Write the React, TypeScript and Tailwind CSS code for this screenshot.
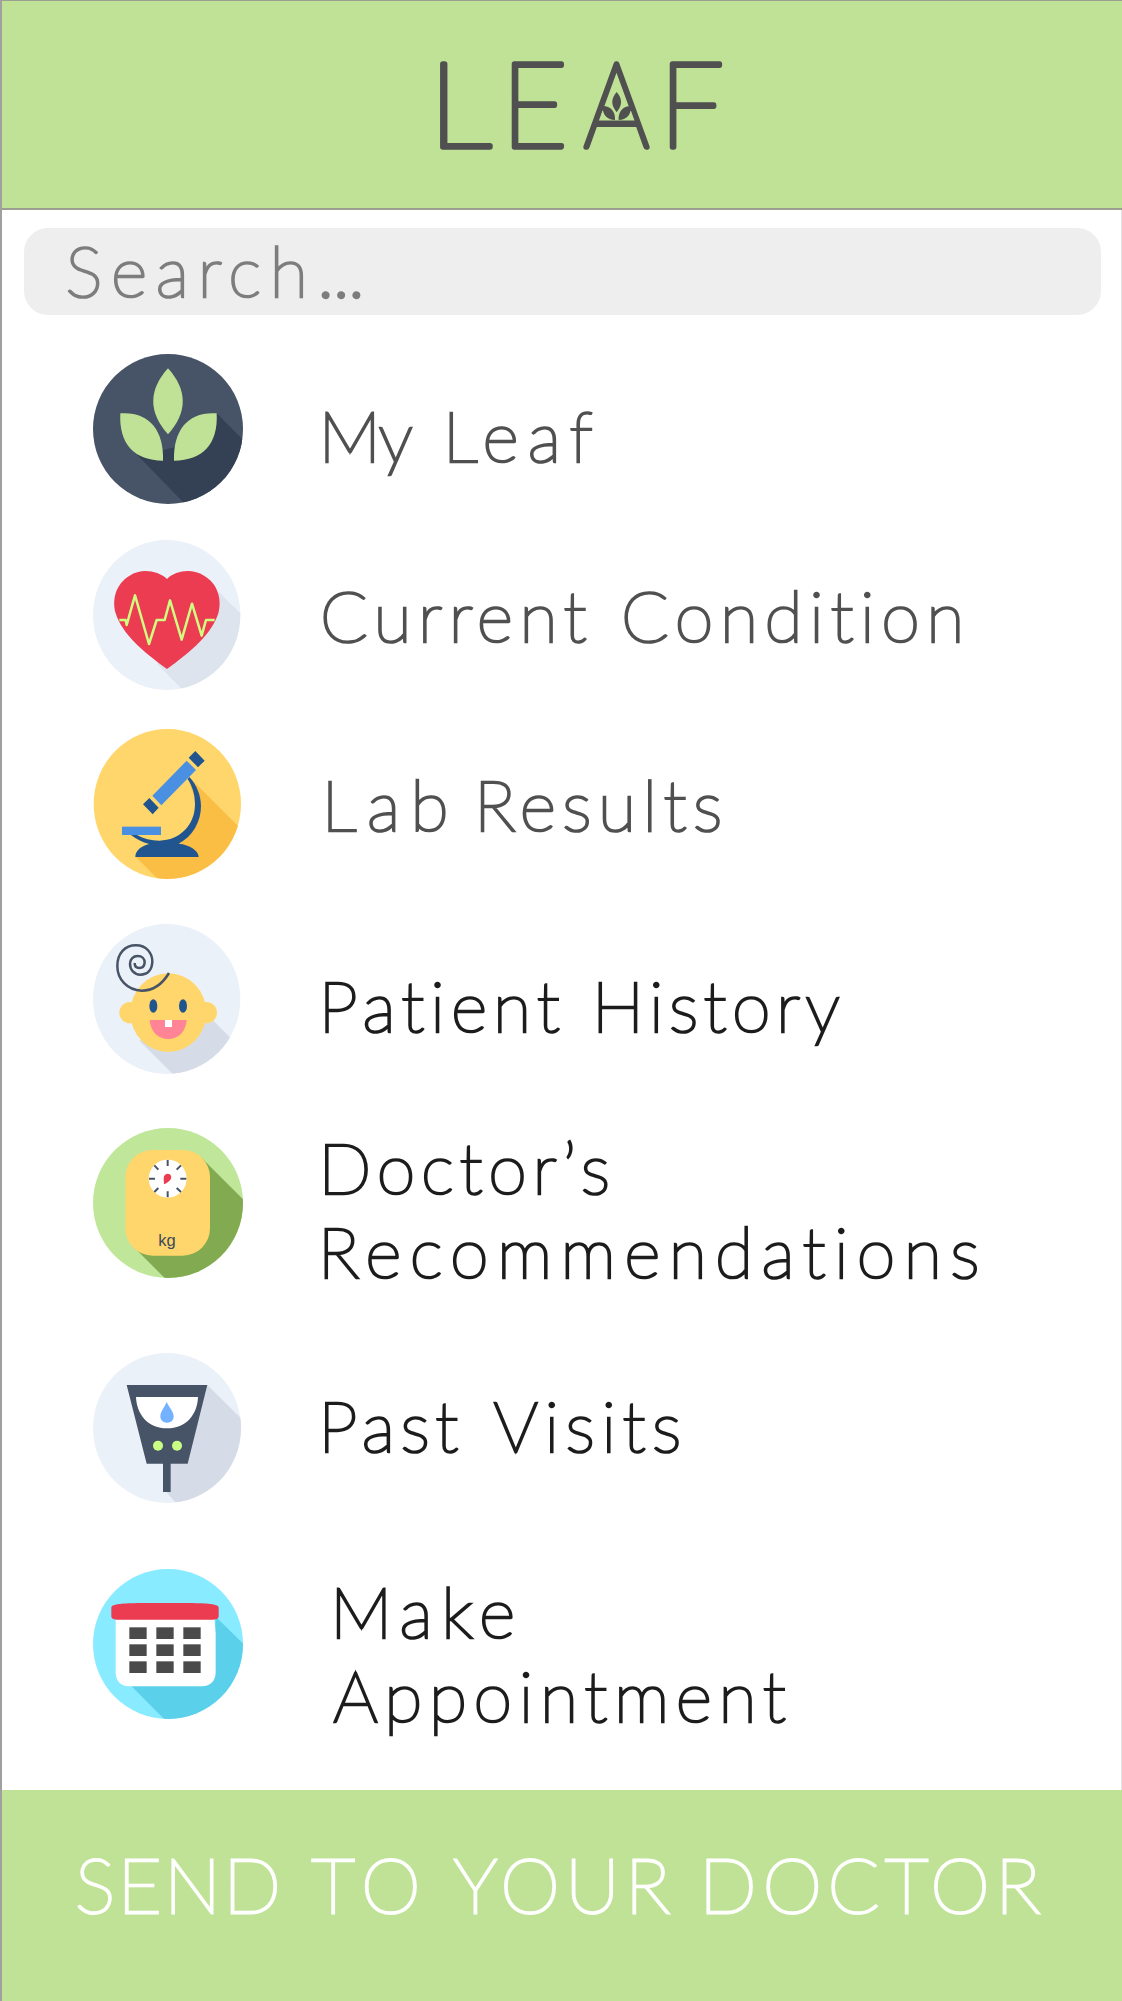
import React from "react";

type Word = { text: string; className: string };
type Line = { className: string; words: Word[] };
type Item = { icon: React.ReactNode; row: string; label: string; lines: Line[] };

function Badge({ id, top, cx, rx, fill, children }: {
  id: string; top: number; cx: number; rx: number; fill: string; children: React.ReactNode;
}) {
  return (
    <svg className="size-[150px] shrink-0" viewBox={`39 ${top} 450 450`} aria-hidden="true">
      <defs>
        <clipPath id={id}>
          <ellipse cx={cx} cy={top + 225} rx={rx} ry="225" />
        </clipPath>
      </defs>
      <g clipPath={`url(#${id})`}>
        <rect x="39" y={top} width="450" height="450" fill={fill} />
        {children}
      </g>
    </svg>
  );
}

const LeafIcon = () => (
  <Badge id="c-leaf" top={42} cx={264} rx={225} fill="#475366">
    <path d="M410 220L520 330V520H342L172 345L240 332L284 322Z" fill="#344054" />
    <path d="M264 85C323 150 323 218 264 283C205 218 205 150 264 85Z" fill="#c0e297" />
    <path d="M121 220C205 214 252 268 249 362C163 362 116 312 121 220Z" fill="#c0e297" />
    <path d="M410 220C326 214 279 268 282 362C368 362 415 312 410 220Z" fill="#c0e297" />
  </Badge>
);

const HeartIcon = () => (
  <Badge id="c-heart" top={45} cx={260} rx={221} fill="#ebf1f8">
    <path d="M416 200L520 304V520H333L232 418Z" fill="#dde4ed" />
    <path d="M261 162C232 135 182 130 149 152C108 176 95 222 107 265C126 326 188 380 261 432C334 380 396 326 415 265C427 222 412 174 372 152C338 130 288 135 261 162Z" fill="#eb3c51" />
    <path d="M118 285H137L140 300L165 211L207 357L230 285H254L270 226L305 344L336 236L365 332L378 285H404" fill="none" stroke="#d1fc82" strokeWidth="7.5" />
  </Badge>
);

const MicroscopeIcon = () => (
  <Badge id="c-micro" top={42} cx={262} rx={221} fill="#ffd66b">
    <path d="M328 187L520 379V540H281L167 425L300 385L345 300Z" fill="#fbbe44" />
    <ellipse cx="235" cy="268" rx="110" ry="109" fill="#ffd66b" />
    <path d="M328 186C350 210 363 240 363 273C363 320 338 364 296 386C330 389 356 408 356 426H166C166 406 184 393 208 387C187 382 167 372 153 360H171C191 371 213 377 238 377C300 376 345 330 345 268C345 240 338 215 323 192Z" fill="#215590" />
    <rect x="126" y="335" width="117" height="25" fill="#4a90e2" />
    <path d="M320 137L348 165L244 271L217 242Z" fill="#4a90e2" />
    <path d="M346 108L374 137L354 157L326 128ZM208 249L236 278L218 298L189 268Z" fill="#215590" />
  </Badge>
);

const BabyIcon = () => (
  <Badge id="c-baby" top={42} cx={260} rx={221} fill="#ebf1f8">
    <path d="M401 333L470 402V520H306L178 392Z" fill="#d5dce7" />
    <circle cx="150" cy="308" r="32" fill="#ffd66b" />
    <circle cx="379" cy="308" r="32" fill="#ffd66b" />
    <ellipse cx="265" cy="308" rx="114" ry="118" fill="#ffd66b" />
    <ellipse cx="220" cy="288" rx="12" ry="20" fill="#215590" />
    <ellipse cx="309" cy="288" rx="12" ry="20" fill="#215590" />
    <path d="M209 330H320C318 363 296 387 265 387C233 387 211 363 209 330Z" fill="#ff8495" />
    <rect x="255" y="330" width="21" height="21" fill="#fff" />
    <path d="M267 189C246 224 220 242 185 242C142 241 112 208 112 168C112 130 135 106 168 106C199 106 217 129 217 155C216 180 202 194 181 194C162 194 150 179 150 161C150 147 160 138 173 138C186 138 194 147 194 158C193 168 187 174 178 174C170 174 164 169 164 159" fill="none" stroke="#475366" strokeWidth="7.5" />
  </Badge>
);

const ScaleIcon = () => (
  <Badge id="c-scale" top={39} cx={264} rx={225} fill="#c0e699">
    <path d="M362 126L520 284V520H285L168 403Z" fill="#82ab51" />
    <rect x="136" y="105" width="254" height="317" rx="82" fill="#ffd66b" />
    <circle cx="263" cy="191" r="57" fill="#fff" />
    <path d="M263 135V153M263 229V247M207 191H225M301 191H319M223 151L235 164M303 151L290 164M223 231L235 219M303 231L290 219" stroke="#475366" strokeWidth="6" />
    <path d="M252 208C251 195 251 188 252 184C256 174 270 174 273 183C276 193 267 201 252 208Z" fill="#eb3c51" />
    <text x="235" y="392" fontFamily="Liberation Sans, sans-serif" fontSize="48" fontWeight="400" textLength="52" lengthAdjust="spacingAndGlyphs" fill="#3d495c">kg</text>
  </Badge>
);

const MeterIcon = () => (
  <Badge id="c-meter" top={39} cx={261} rx={222} fill="#ebf1f8">
    <path d="M382 135L520 271V530H326L261 459L271 371L322 371Z" fill="#d5dce7" />
    <path d="M140 135H382L323 371H272V456H249V371H200Z" fill="#475366" />
    <path d="M168 171H354C352 225 317 265 261 265C205 265 170 225 168 171Z" fill="#fff" />
    <path d="M260 186C268 202 281 216 281 229C281 241 273 248 261 248C250 248 241 241 241 229C241 216 253 202 260 186Z" fill="#74b2ff" />
    <circle cx="234" cy="317" r="15" fill="#c9ff84" />
    <circle cx="291" cy="317" r="15" fill="#c9ff84" />
  </Badge>
);

const CalendarIcon = () => (
  <Badge id="c-cal" top={42} cx={264} rx={225} fill="#89ebff">
    <path d="M407 185L520 296V520H280L145 384L403 300Z" fill="#5bd0ea" />
    <path d="M107 190H403L407 235V352C407 378 391 394 366 394H146C122 394 107 378 107 352Z" fill="#fff" />
    <path d="M94 158C94 146 132 145 180 144H330C378 145 416 146 416 158V184C416 190 411 194 400 194H110C99 194 94 190 94 184Z" fill="#eb3c51" />
    {[217, 268, 319].map((y) =>
      [148, 229, 310].map((x) => <rect key={`${x}-${y}`} x={x} y={y} width="52" height="35" fill="#4a4a4a" />)
    )}
  </Badge>
);

const items: Item[] = [
  {
    icon: <LeafIcon />, row: "", label: "pt-[38.5px] text-[#505050]",
    lines: [{ className: "gap-[31.5px] pl-[75.5px]", words: [
      { text: "My", className: "tracking-[-1.5px]" }, { text: "Leaf", className: "tracking-[9px]" }] }],
  },
  {
    icon: <HeartIcon />, row: "mt-9", label: "pt-[32.5px] text-[#505050]",
    lines: [{ className: "gap-[28px] pl-[77px]", words: [
      { text: "Current", className: "tracking-[6.5px]" }, { text: "Condition", className: "tracking-[6.6px]" }] }],
  },
  {
    icon: <MicroscopeIcon />, row: "mt-[39px]", label: "pt-[32.5px] text-[#505050]",
    lines: [{ className: "gap-[15px] pl-[78.6px]", words: [
      { text: "Lab", className: "tracking-[10.4px]" }, { text: "Results", className: "tracking-[6.5px]" }] }],
  },
  {
    icon: <BabyIcon />, row: "mt-[45px]", label: "pt-[39px] text-[#1c1c1c]",
    lines: [{ className: "gap-[26px] pl-[75.5px]", words: [
      { text: "Patient", className: "tracking-[6.05px]" }, { text: "History", className: "tracking-[5.4px]" }] }],
  },
  {
    icon: <ScaleIcon />, row: "mt-[54px]", label: "-mt-[3.5px] text-[#1c1c1c]",
    lines: [
      { className: "pl-[75.3px]", words: [{ text: "Doctor’s", className: "tracking-[5.8px]" }] },
      { className: "pl-[74.8px]", words: [{ text: "Recommendations", className: "tracking-[8.35px]" }] },
    ],
  },
  {
    icon: <MeterIcon />, row: "mt-[75px]", label: "pt-[29.5px] text-[#1c1c1c]",
    lines: [{ className: "gap-[29.5px] pl-[75.3px]", words: [
      { text: "Past", className: "tracking-[5.6px]" }, { text: "Visits", className: "tracking-[6.5px]" }] }],
  },
  {
    icon: <CalendarIcon />, row: "mt-[66px]", label: "text-[#1c1c1c]",
    lines: [
      { className: "pl-[87px]", words: [{ text: "Make", className: "tracking-[8.6px]" }] },
      { className: "pl-[90.3px]", words: [{ text: "Appointment", className: "tracking-[6.65px]" }] },
    ],
  },
];

function Logo() {
  return (
    <svg className="h-[155px] w-[320px]" viewBox="415 25 320 155" role="img" aria-label="LEAF">
      <g fill="#505050" stroke="#505050" strokeWidth="5.4" strokeLinejoin="round" fontFamily="Lato, sans-serif" fontWeight="100" fontSize="118">
        <text x="428.3" y="147.3" textLength="63.5" lengthAdjust="spacingAndGlyphs">L</text>
        <text x="501" y="147.3" textLength="67" lengthAdjust="spacingAndGlyphs">E</text>
        <text x="583.5" y="147.3" textLength="66" lengthAdjust="spacingAndGlyphs">A</text>
        <text x="659" y="147.3" textLength="65" lengthAdjust="spacingAndGlyphs">F</text>
      </g>
      {/* The crossbar of the A sits low, leaving room for the sprig */}
      <path d="M602.4 111H631L635.4 123H598Z" fill="#c0e297" />
      <path d="M595 123.8H638.5" stroke="#505050" strokeWidth="6.6" />
      <g fill="#505050">
        <path d="M616.7 92C622.5 99 622.5 105 616.7 112.3C610.8 105 610.8 99 616.7 92Z" />
        <path d="M602.6 106C611 106 615.5 112 615 120C607 120 602.3 114.5 602.6 106Z" />
        <path d="M631 106C622.6 106 618.1 112 618.6 120C626.6 120 631.3 114.5 631 106Z" />
      </g>
    </svg>
  );
}

export default function App() {
  return (
    <div className="flex h-[2001px] w-[1122px] flex-col overflow-hidden border-l-2 border-[#a0a0a0] bg-white font-['Lato',sans-serif] font-thin [stroke-linejoin:round]">
      <header className="h-[210px] shrink-0 border-t border-b-2 border-[#9a9f92] bg-[#c0e297] pt-6 pl-[413px]">
        <Logo />
      </header>

      <main className="flex flex-1 flex-col border-r border-[#e2e2e2]">
        <div
          role="searchbox"
          aria-label="Search"
          className="mt-[18px] ml-[22px] flex h-[87px] w-[1077px] shrink-0 rounded-[24px] bg-[#eeeeee] pl-[41.5px] text-[70px] leading-[84px] text-[#7d7d7d] [-webkit-text-stroke:2.7px_#7d7d7d]"
        >
          <span className="tracking-[8.8px]">Search</span>
          <span className="ml-px tracking-[-0.8px] [-webkit-text-stroke:3.5px_#7d7d7d]">...</span>
        </div>

        <nav className="flex flex-1 flex-col pt-[39px] pl-[91px]">
          {items.map((item, i) => (
            <a key={i} className={`flex h-[150px] shrink-0 items-start ${item.row}`}>
              {item.icon}
              <span className={`flex flex-col text-[70px] leading-[84px] whitespace-nowrap [-webkit-text-stroke:2.7px_currentColor] ${item.label}`}>
                {item.lines.map((line, j) => (
                  <span key={j} className={`flex ${line.className}`}>
                    {line.words.map((word) => (
                      <span key={word.text} className={word.className}>{word.text}</span>
                    ))}
                  </span>
                ))}
              </span>
            </a>
          ))}
        </nav>
      </main>

      <button className="flex h-[211px] shrink-0 items-start bg-[#c0e297] pt-12 pl-[73px] text-left text-[76px] leading-[91px] text-white [-webkit-text-stroke:2.8px_white]">
        <span className="mr-[28.3px] tracking-[2.3px]">SEND</span>
        <span className="mr-[23.3px] tracking-[9.9px]">TO</span>
        <span className="mr-[23.8px] tracking-[5.3px]">YOUR</span>
        <span className="tracking-[5.6px]">DOCTOR</span>
      </button>
    </div>
  );
}
